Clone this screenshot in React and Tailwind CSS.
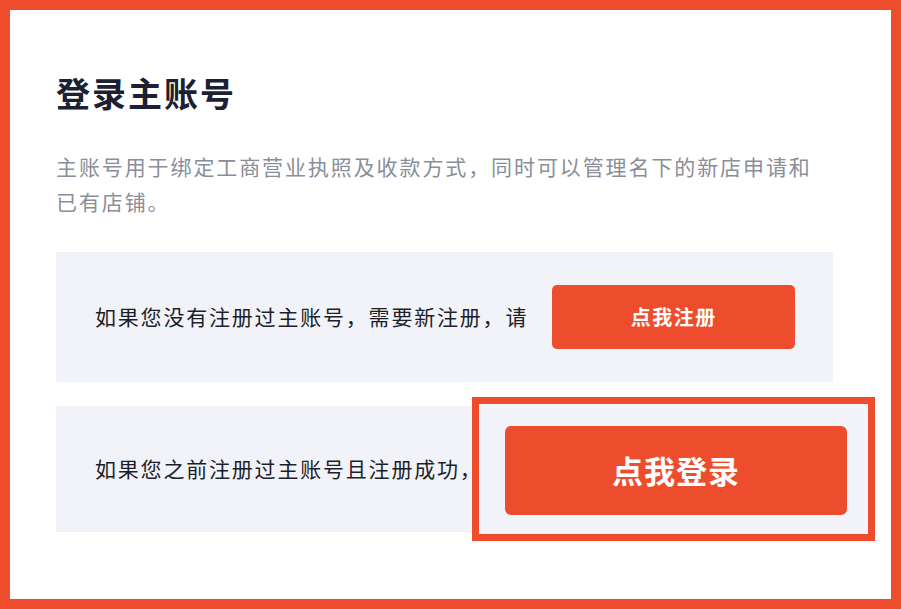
import React from "react";

const font = { fontFamily: '"Noto Sans CJK SC", "Noto Sans", sans-serif' };

export default function App() {
  return (
    <div
      style={font}
      className="w-[901px] h-[609px] border-[10px] border-[#ee4d2d] bg-white overflow-hidden"
    >
      <div className="pl-[46px] pr-[47px] pt-[63px]">
        {/* Title */}
        <h1 className="text-[34px] leading-[40px] font-bold tracking-[2px] text-[#1b2033]">
          登录主账号
        </h1>

        {/* Description */}
        <p className="mt-[36px] w-[770px] text-[21px] leading-[35px] tracking-[1.9px] text-[#8a8e99]">
          主账号用于绑定工商营业执照及收款方式，同时可以管理名下的新店申请和已有店铺。
        </p>

        {/* Register row */}
        <div className="mt-[33px] w-[777px] h-[130px] bg-[#f2f3f8] flex items-center pl-[39px] gap-[24px]">
          <span className="text-[21px] tracking-[1.8px] text-[#1c1f2a] whitespace-nowrap">
            如果您没有注册过主账号，需要新注册，请
          </span>
          <button className="w-[243px] h-[64px] rounded-[5px] bg-[#ee4d2d] text-white text-[20px] font-bold tracking-[1.5px]">
            点我注册
          </button>
        </div>

        {/* Login row */}
        <div className="relative mt-[24px] w-[777px] h-[126px] bg-[#f2f3f8] flex items-center pl-[39px]">
          <span className="text-[21px] tracking-[1.8px] text-[#1c1f2a] whitespace-nowrap">
            如果您之前注册过主账号且注册成功，请
          </span>

          {/* highlight callout */}
          <div className="absolute left-[416px] top-[-9px] w-[403px] h-[144px] border-[7px] border-[#ee4d2d] bg-[#f3f4fa] pl-[26px] pt-[22px]">
            <button className="w-[342px] h-[89px] rounded-[6px] bg-[#ee4d2d] text-white text-[31px] font-bold tracking-[1px]">
              点我登录
            </button>
          </div>
        </div>
      </div>
    </div>
  );
}
